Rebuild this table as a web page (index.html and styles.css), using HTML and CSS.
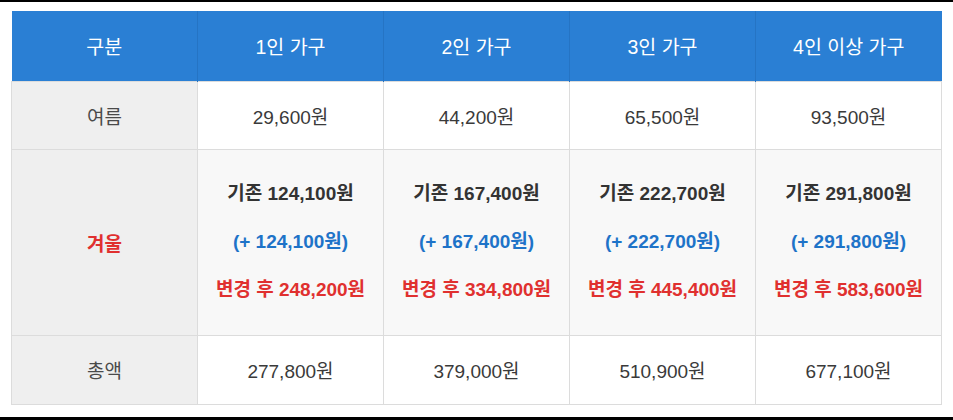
FILE: index.html
```html
<!DOCTYPE html>
<html lang="ko">
<head>
<meta charset="utf-8">
<link rel="stylesheet" href="styles.css">
</head>
<body>
<div class="frame">
  <table class="fee">
    <thead>
      <tr class="head">
        <th>구분</th>
        <th>1인 가구</th>
        <th>2인 가구</th>
        <th>3인 가구</th>
        <th>4인 이상 가구</th>
      </tr>
    </thead>
    <tbody>
      <tr class="r-summer">
        <td class="label">여름</td>
        <td>29,600원</td>
        <td>44,200원</td>
        <td>65,500원</td>
        <td>93,500원</td>
      </tr>
      <tr class="r-winter">
        <td class="label winter">겨울</td>
        <td><p class="base">기존 124,100원</p><p class="plus">(+ 124,100원)</p><p class="after">변경 후 248,200원</p></td>
        <td><p class="base">기존 167,400원</p><p class="plus">(+ 167,400원)</p><p class="after">변경 후 334,800원</p></td>
        <td><p class="base">기존 222,700원</p><p class="plus">(+ 222,700원)</p><p class="after">변경 후 445,400원</p></td>
        <td><p class="base">기존 291,800원</p><p class="plus">(+ 291,800원)</p><p class="after">변경 후 583,600원</p></td>
      </tr>
      <tr class="r-total">
        <td class="label">총액</td>
        <td>277,800원</td>
        <td>379,000원</td>
        <td>510,900원</td>
        <td>677,100원</td>
      </tr>
    </tbody>
  </table>
</div>
</body>
</html>
```
FILE: styles.css
```css
* { box-sizing: border-box; }
html, body { margin: 0; padding: 0; background: #fff; }
body {
  font-family: "Liberation Sans", "Noto Sans CJK KR", sans-serif;
  color: #333;
}
.frame {
  width: 953px;
  height: 420px;
  border-top: 2px solid #000;
  border-bottom: 3px solid #000;
  padding: 9px 0 0 11px;
}
.fee {
  width: 931px;
  border-collapse: collapse;
  table-layout: fixed;
  font-size: 19px;
}
.fee th, .fee td {
  text-align: center;
  vertical-align: middle;
  padding: 0;
}
.fee td {
  border: 1px solid #dcdcdc;
  color: #3a3a3a;
}
.head th {
  background: #2a7fd4;
  color: #fff;
  font-weight: normal;
  font-size: 19.5px;
  height: 70px;
  border-right: 1px solid #2574c4;
}
.head th:last-child { border-right: none; }
.r-summer td { height: 68px; background: #fff; }
.r-winter td { height: 186px; background: #f8f8f8; }
.r-total td { height: 69px; background: #fff; }
.fee td.label { background: #efefef; color: #4a4a4a; }
.fee td.winter { color: #e0302f; font-weight: bold; }
.r-winter p {
  margin: 0;
  line-height: 48px;
  font-weight: bold;
}
.base { color: #333; }
.plus { color: #1e73c8; }
.after { color: #e0302f; }
```
